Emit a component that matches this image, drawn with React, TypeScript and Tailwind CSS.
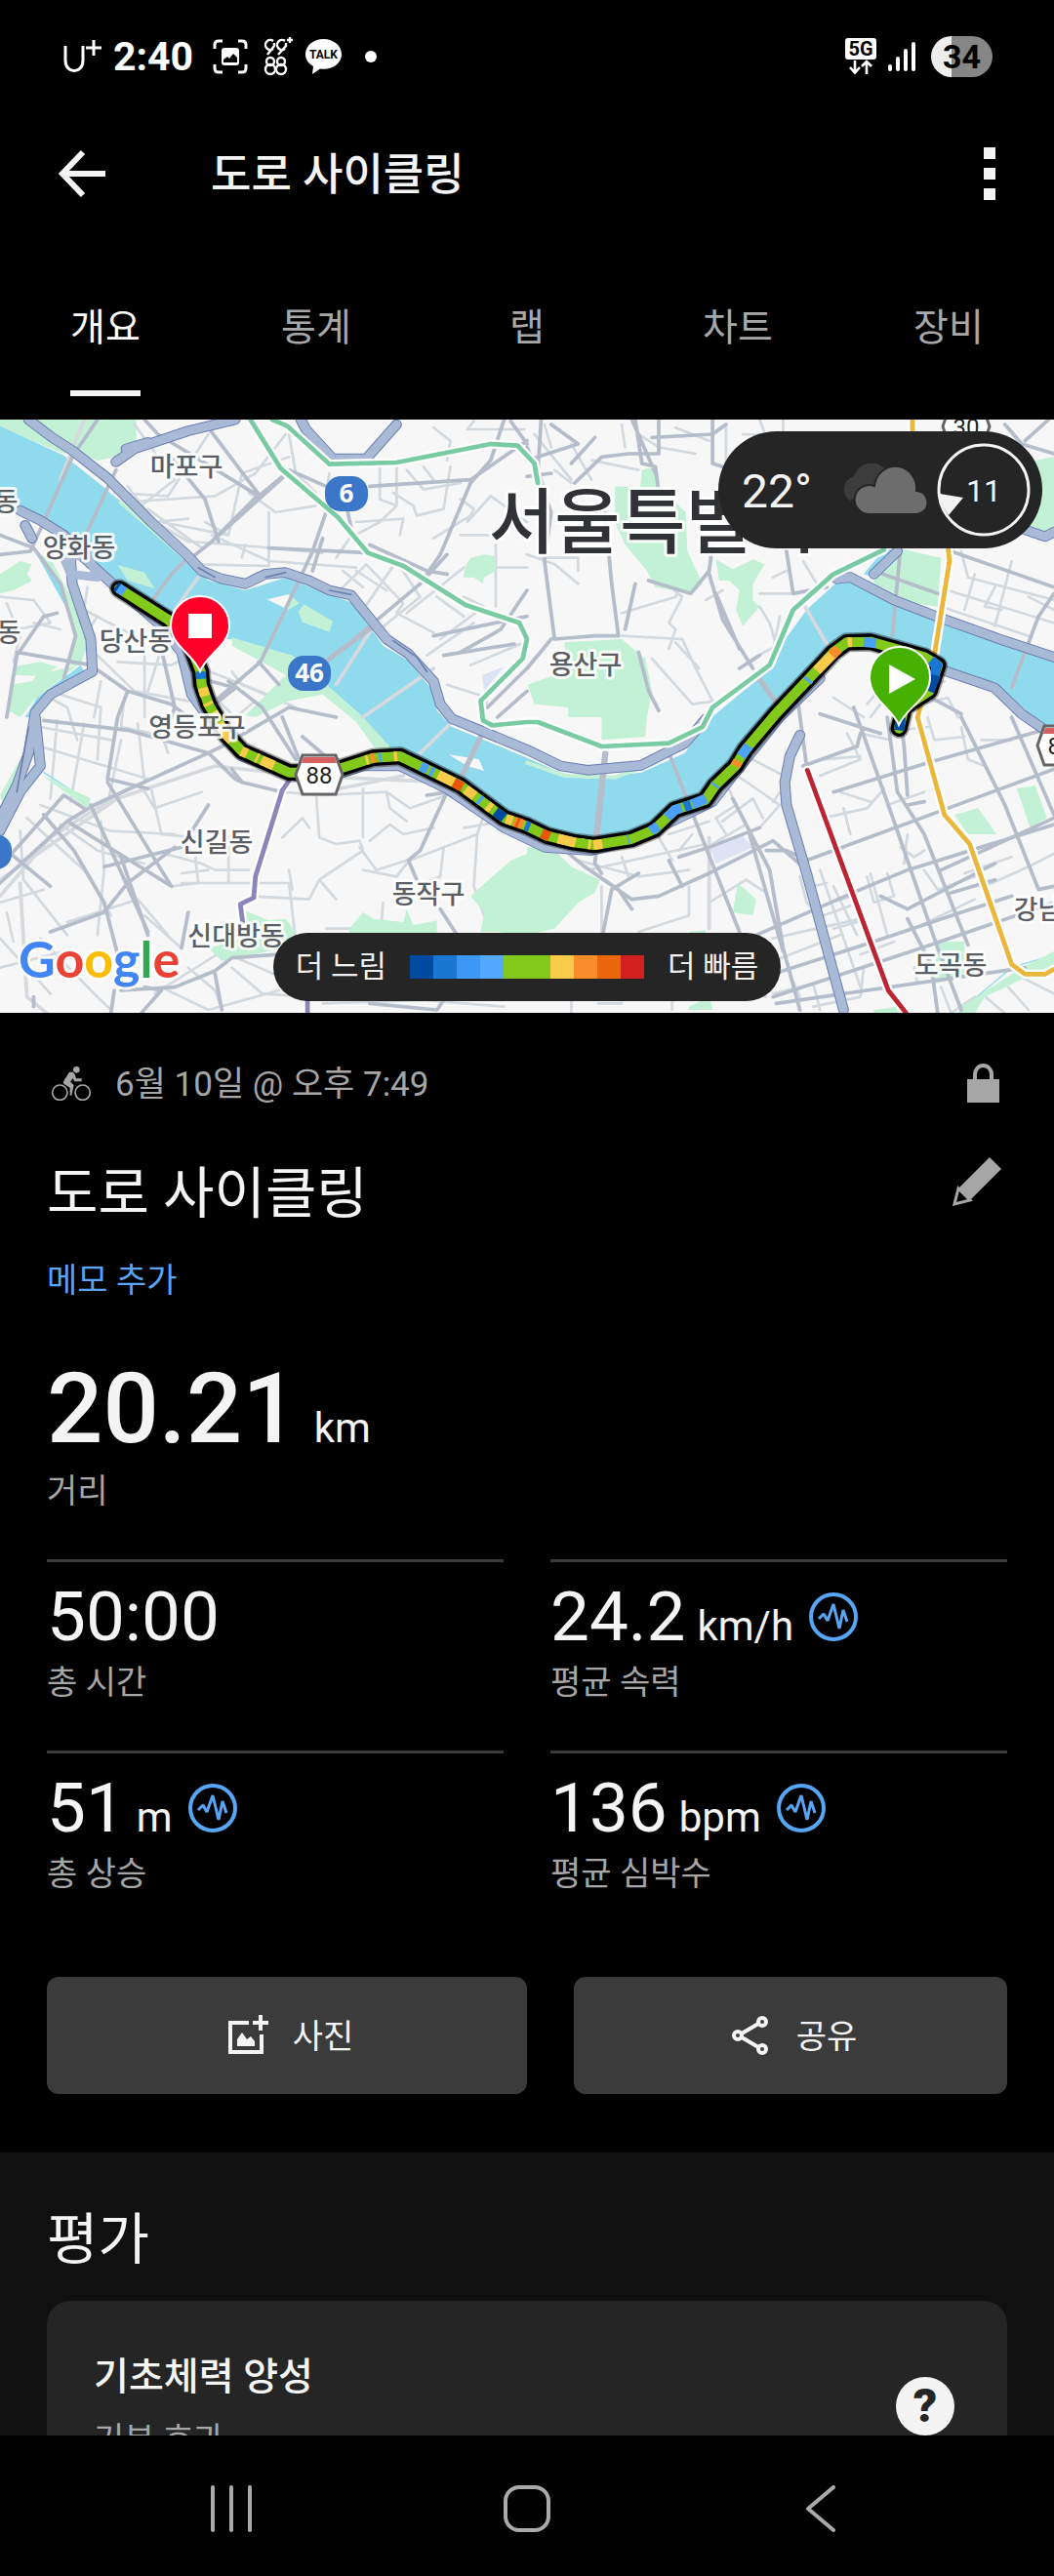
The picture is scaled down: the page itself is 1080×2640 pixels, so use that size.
import type { ReactNode } from 'react';

const tabs = ['개요', '통계', '랩', '차트', '장비'];

const stats = [
  { value: '50:00', unit: '', label: '총 시간', chart: false },
  { value: '24.2', unit: 'km/h', label: '평균 속력', chart: true },
  { value: '51', unit: 'm', label: '총 상승', chart: true },
  { value: '136', unit: 'bpm', label: '평균 심박수', chart: true },
];

const speedColors = [
  'bg-[#004a9f]',
  'bg-[#1976d2]',
  'bg-[#3d97f5]',
  'bg-[#55a8ff]',
  'bg-[#83c91c]',
  'bg-[#83c91c]',
  'bg-[#facb4b]',
  'bg-[#fa8d29]',
  'bg-[#ea670c]',
  'bg-[#d3201f]',
];

const mapLabels = [
  { text: '마포구', x: 191, y: 48 },
  { text: '양화동', x: 81, y: 131 },
  { text: '당산동', x: 139, y: 227 },
  { text: '동', x: 6, y: 84 },
  { text: '동', x: 9, y: 218 },
  { text: '영등포구', x: 202, y: 315 },
  { text: '신길동', x: 222, y: 433 },
  { text: '동작구', x: 439, y: 486 },
  { text: '신대방동', x: 242, y: 529 },
  { text: '용산구', x: 600, y: 251 },
  { text: '강남구', x: 1076, y: 502 },
  { text: '도곡동', x: 974, y: 559 },
];

const parks = [
  'M0 15H405V90L380 120L290 142L215 110L190 120L0 40Z',
  'M0 490L60 450L95 460L80 490L95 510L40 540L0 550Z',
  'M40 775L120 760L170 775L130 805L45 800Z',
  'M30 830L95 820L110 800L230 770L100 880L60 930L25 910Z',
  'M110 430L150 440L230 600L260 700L240 770L200 770L225 680L190 540Z',
  'M350 462L430 485L460 535L380 510Z',
  'M270 450L340 510L330 520L260 470Z',
  'M905 583L990 635L980 668L900 638L887 605Z',
  'M860 550L890 580L860 600Z',
  'M690 685L870 740L960 820L1080 930L1160 1020L1140 1060L1060 945L960 860L860 880L760 930L730 925L850 800L690 710Z',
  'M1400 440L1440 430L1475 435L1475 480L1440 500L1437 520L1410 500L1378 500L1385 465Z',
  'M1830 220L1905 225L1910 170L1950 160L1955 215L2040 300L2045 420L2090 520L2060 550L1950 530L1925 480L1860 400L1830 330Z',
  'M2130 445L2180 475L2240 445L2275 460L2240 520L2240 570L2260 590L2210 650L2190 600L2200 540L2170 510L2140 510Z',
  'M1680 700L1850 690L1920 750L1940 850L1925 930L1920 990L1790 1000L1790 930L1690 930L1690 900L1590 890L1570 830L1680 790Z',
  'M2600 480L2690 415L2800 440L2790 590L2720 580L2600 520Z',
  'M3030 150L3136 130V350L3090 360L2990 330Z',
  'M1400 1480L1520 1370L1568 1350V1330L1640 1330L1700 1390L1785 1430L1770 1470L1720 1500L1650 1580L1568 1600L1480 1590L1430 1590L1440 1530Z',
  'M1040 1580L1080 1530L1110 1550L1200 1560L1210 1520L1230 1570L1300 1555V1595H1040Z',
  'M730 1525L800 1555L850 1550L880 1590L840 1640L660 1680L620 1640L720 1610Z',
  'M2195 1440L2250 1490L2240 1540L2180 1530Z',
  'M2840 1230L2910 1210L2965 1290L2880 1290Z',
  'M3025 1150L3080 1140L3115 1240L3065 1270Z',
  'M2790 1620L2870 1620L2870 1730L2775 1750Z',
  'M2860 1820L3040 1700L3136 1650V1690L2930 1790L2900 1840H2850Z',
  'M2050 1590L2100 1585L2100 1610L2060 1600ZM2050 1820L2110 1790L2120 1830H2050ZM2600 1830L2670 1820V1840H2600Z',
  'M130 1110L270 1180L260 1210L140 1120ZM0 1170L60 1060L50 1120L10 1200Z',
];

const minorRoads = [
  'M340 240L500 250L620 60M360 270L640 250L760 180L850 60M440 290L600 410M480 330L680 370L720 180L860 130',
  'M400 30L520 200L420 280M630 370L800 450L1060 470M720 440L730 400M800 300V460M590 460L800 465',
  'M610 330L680 370M740 240L820 300L940 280M380 220L460 330L560 320M330 250L560 390L700 400L960 425',
  'M860 60L880 180L940 240M980 180L970 240M1130 160V260L1180 280V160M1180 280L1130 330L1040 380L1000 440M1170 240L1230 280L1240 310L1320 290L1340 160',
  'M1060 330L1200 320L1190 370M1210 170L1260 230L1370 210M1260 160L1290 200M1290 40L1340 80L1330 140M1390 45H1560M1390 45L1410 20',
  'M1370 260L1410 290L1390 330L1460 250L1568 330M1290 380L1400 310M1370 370H1460M1470 470H1568M1475 400V590',
  'M990 560L1090 460L1200 580L1180 610L1290 670M1080 600L1180 450L1250 560L1130 660M1210 610L1380 470M1150 540L1060 480M1020 480L1080 530',
  'M1300 560L1380 620M1310 690L1440 590L1380 560M1270 740L1410 640M1330 830L1450 870L1430 980M1400 770L1560 700',
  'M260 530L250 600L400 680M230 590L290 620L240 700M0 560L100 570L150 640L50 660M20 580L60 680L40 760M100 640L180 660',
  'M290 740L400 850L560 880M300 820L280 930M350 760L510 770L640 700M430 700V930M560 820L640 870L700 930L760 880M600 780L820 870',
  'M370 870L360 960L500 990M180 860L300 900L290 1060M130 860L200 900L230 1000M480 720L440 850M690 790L720 830L880 900',
  'M120 960L330 1000M120 1020L440 1120M170 940L150 1180M250 950L210 1190M360 1000L320 1200M410 950L430 1130M480 980L500 1040',
  'M120 1200L330 1280L520 1290M180 1260L290 1340L430 1380M80 1240L260 1410L330 1540M60 1280L70 1430L200 1600M300 1250L310 1400L290 1600',
  'M420 1140L460 1210L600 1160M450 1150L480 1290L580 1300M490 1350L600 1380L640 1400H740M580 1350L590 1440L510 1450M680 1300V1440',
  'M540 1440H860L880 1620M540 1410L620 1400M740 1480L920 1490L950 1430L1080 1340L1070 1310L1000 1320L950 1300L940 1160M950 1430L1000 1490',
  'M1080 1150V1300M840 1160L960 1170L1150 1160L1220 1210L1330 1170M1150 1160L1160 1210L1210 1250M1070 1330L1120 1400L1210 1370M1100 1310L1160 1260L1200 1290L1290 1270M1220 1370L1420 1290L1450 1200M1320 1330L1310 1420L1260 1440M1140 1500L1130 1610',
  'M1380 1270L1500 1250M1420 1290L1410 1450L1440 1540M1080 1400L1180 1420L1210 1380M860 1400L870 1460M970 1580H1050M840 1300L900 1240L920 1270',
  'M0 1610L150 1780M0 1700L190 1650L270 1720M120 1610L280 1780L330 1830M200 1560L410 1490L500 1600M430 1540L540 1640M20 1530L40 1620M0 1500L130 1460',
  'M460 1780L660 1650L860 1740M480 1760L620 1830L830 1770M560 1700L640 1770L660 1830M690 1700L780 1780L930 1790M960 1810L1260 1800L1500 1820',
  'M1720 1370L1900 1420L2050 1400M1750 1400L2100 1320M1790 1450V1590M1850 1360L1870 1420M2050 1450V1540L1900 1590M1990 1290L2110 1250M2020 1340L2060 1290M1960 1300L2000 1370',
  'M2160 1130L2190 1200L2130 1240L2160 1290M2180 1100L2320 1200L2260 1270M2240 1060L2350 1120L2300 1190M2150 1250L2240 1180L2270 1240M2120 1320L2220 1260',
  'M2440 1110L2560 1060L2520 980M2500 1160L2590 1190M2450 1240L2580 1210L2630 1150M2510 1210L2530 1290M2110 1500L2220 1430L2280 1470',
  'M1568 430L1650 460L1720 520M1600 440H1720V480M1570 100L1620 220M1590 60L1700 200M1620 30L1640 100M1700 90L1760 200M1760 140L1900 170M1650 170L1700 210',
  'M1900 60L1960 100L2070 120M2010 40L2110 80M2160 40V200L2340 180M2210 60L2430 70M2330 15V60M1850 30L1860 100M2260 15L2280 70',
  'M1980 520L2030 560L1990 640L2010 660L1990 720M1850 610L2010 560L2040 490M1850 680L2030 690L2070 780L2120 880M2010 700L2080 780M2240 750L2310 710L2290 640L2260 590',
  'M2260 550L2370 550M2320 620L2290 780M2390 450L2430 520M2340 480L2300 500M2100 570L2150 540M1940 750L2000 820L2060 890L2130 880',
  'M2820 540L3136 640M2800 590L3060 680M2900 490L2870 600M3010 450L2960 650M2960 530L2930 590L2980 600M2860 420L2880 500L3136 570M3060 560L3136 600',
  'M2580 890L2620 840L2690 860M2480 870L2570 930M2620 890L2590 930M2700 900L2820 870L2850 930M2740 850L2810 820',
  'M2450 1060L2560 1050M2560 980L2650 1000M2680 970L2760 960M2760 930L2780 1000L2870 990M2860 960L2880 1060L2930 1080M2920 1000L3010 1000M2640 1200L2750 1160M2700 1290L2690 1380',
  'M2870 1410L3010 1360M2930 1450L3060 1390L3136 1350M2750 1400L2790 1460L2900 1420M2680 1330L2720 1360L2750 1340M2580 1420L2600 1500L2660 1480L2640 1410M2740 1570L2900 1490M2770 1680L2720 1700L2730 1750',
  'M2480 1450L2550 1600M2450 1540L2530 1510M2480 1580L2550 1560M2440 1400L2560 1760M2590 1410L2640 1600M2420 1450L2460 1440M2470 1500L2540 1480M2380 1420L2400 1500L2440 1540M2300 1610L2560 1550M2300 1680L2500 1600M2560 1660L2660 1620',
  'M2300 1780L2420 1750L2440 1830M2350 1720L2380 1790M2100 1740L2280 1790M1700 1770V1840M1780 1810H1850M2000 1780V1830M2420 1820L2560 1790L2570 1700M2920 1780L2990 1840M3000 1760L3060 1830M3040 1730L3136 1780M2800 1760L2830 1840L2900 1790',
];

const majorRoads = [
  'M290 15L215 130L130 330L90 420L0 430M345 170L250 380M430 15L470 60L770 250L840 190M620 40L770 245L630 390M500 120L610 260L650 390',
  'M570 440L630 390L840 195M860 170L970 220M1100 220L1400 200M1400 200L1470 150L1568 80M1500 15L1460 140L1400 210L1310 430L1270 490',
  'M800 410L1100 425M970 300L930 420L885 520L775 760L640 880M1035 300L1045 350M1100 400L1270 480L1330 490M1568 540L1490 660L1370 730M1290 680L1568 620',
  'M560 440L510 490L440 590M970 760L1100 650L1250 520L1330 430M1520 20L1568 90M1320 740L1530 705M1450 900L1568 780M1480 930L1568 850',
  'M770 760L830 830M680 820L780 900L880 1060M560 800L700 840L640 890M960 380L930 480',
  'M0 370L100 410L180 520L225 680L190 810M20 930L50 740L130 620L170 610M50 730L270 770L380 850L510 890L560 930M380 850L350 930L320 1120L440 1150',
  'M130 940L380 970L620 1040L700 1120L720 1130M480 720L520 900L510 930M0 1440L200 1250L280 1200L620 1040L660 1020L860 900L1000 930',
  'M130 1230L220 1340L310 1500L360 1700M200 1250L510 1450M270 1200L440 1590M360 1360L440 1600M310 1390L540 1330L620 1200M150 1590L310 1530L380 1440L520 1330M0 1390L190 1170L250 1210M20 1340L150 1450M320 1130L510 1450M560 1530L540 1640',
  'M690 1090L720 1130L840 1160M840 930L890 1060M980 1060L900 990M1330 1160L1250 1340L1215 1370L1240 1430M1310 1520L1360 1600M1270 1170L1340 1160',
  'M360 1770L520 1760L640 1710L690 1670L820 1660M430 1760L480 1770L420 1840M100 1820V1790M340 1770L330 1840M640 1720L660 1830M1100 1810L1300 1830L1320 1800',
  'M1610 15L1600 180M1800 300L1820 520L1840 680L1770 680L1650 690L1620 450L1640 300L1568 100M1640 690L1568 780M1568 140L1720 90L1640 30M1700 150L1770 70M1710 210L1790 130L1870 120M1890 15L1910 150L1950 160L1960 240M1880 15L1950 180M1960 15V120H1870M1940 70L2120 60L2160 30M2120 15V150L2180 170M1568 190L1640 180',
  'M2340 420L2360 550L2460 530M1890 520L1860 660M1930 510L2055 550L2110 480L2120 400M2110 490L2150 630L2240 780M2130 550L2200 720M2200 780L2260 740M1900 730L1930 850L1960 910M2680 400L2655 680M2600 480L2790 550M2830 420L3136 530M2990 30L3040 90L3136 120M3136 550L3090 620L3010 840M3050 80L3120 15',
  'M1805 1040L1770 1380L1790 1410M1990 1040L2100 1330L2200 1590M1670 1330L1740 1390L1880 1490L1960 1480L2110 1410L2300 1310L2400 1400M1740 1390L1840 1460L1880 1520M1900 1410L1820 1460L1795 1590M2020 1360L2110 1330L2260 1270M1990 1370L2030 1450M2180 1180L2290 1400L2330 1640L2380 1830M2230 1290L2330 1650',
  'M2250 1600L2560 1460L2700 1400L3136 1260M2300 1720L2600 1620L2860 1530L3010 1480M2300 1790L2740 1640L3136 1500M2280 1340L2340 1340L2400 1370L3136 1090M2390 1080L2550 1020L2560 980M2480 1160L2760 1070L3000 1000L3136 960',
  'M2540 900L2660 1250L2790 1640L2860 1830M2640 930L2670 1160L2750 1290L2880 1630M2680 930L2690 1020L2700 1170M2860 930L2990 1200L3090 1460M3010 930L3136 1230M2370 850L2400 1080M2440 920L2620 980M2800 1400L3136 1240M2700 1200L2750 1190M2310 1810L3050 1700M2830 1470L2960 1430M3090 1460L3136 1450M2700 1550L2770 1690L2790 1840M2770 870L2860 920M2620 1480L2700 1520L2960 1380',
];

const highways = [
  'M85 15L155 70L215 110L320 195L450 330L560 435L600 480L660 505L730 520L790 490L850 485L920 510L980 540L1045 555L1150 690L1215 735L1290 820L1310 890L1345 935L1440 975L1568 1030L1668 1080L1748 1093L1908 1078L2038 1010L2100 935',
  'M345 145L400 105L560 50L700 15M375 105L440 85M895 15L910 45L990 135L1090 135L1180 30',
  'M60 295L120 325L190 370L250 440L340 525L470 640L540 730L570 860L640 960L720 1050L870 1110L960 1120L1080 1080L1190 1080L1330 1150L1500 1270L1620 1330L1760 1340L1880 1310L2020 1240L2120 1190L2180 1110L2320 930L2440 810',
  'M210 440L215 520L270 690L275 790L150 860L105 915L85 1040L50 1140L0 1240M105 930L120 1080L60 1160L0 1280M75 340L95 380',
  'M2490 505L2530 500L2660 570L2798 625L2988 695L3136 745M2600 490L2670 420M3040 350L3110 375L3136 360',
  'M2790 780L2960 840L3040 920L3110 970L3136 1000',
  'M2380 985L2350 1050L2335 1130L2340 1200L2400 1410L2510 1830',
];

// line colours follow the subway map, each one drawn over a white casing
const railLines = [
  { d: 'M745 15L835 165L1005 315L1095 425L1200 465L1385 585L1545 640L1568 690L1555 750L1430 880L1437 940L1465 955L1568 945L1600 945L1790 1020L1990 1010L2090 960L2120 900L2290 770L2360 600L2480 490L2630 415', color: '#78cba2' },
  { d: 'M810 15L855 35L980 152L1180 147L1460 90L1540 95L1590 150L1600 210', color: '#78cba2' },
  { d: 'M2715 15V60M2820 400L2825 450L2780 740L2730 930L2810 1230L2885 1320L3010 1690L3050 1720H3110L3136 1705', color: '#ebb63c' },
  { d: 'M860 1125L840 1155L760 1420L755 1485L715 1505L722 1560M915 1800V1840', color: '#8a86ba' },
  { d: 'M2402 1093L2643 1770L2700 1845', color: '#bd2431' },
];

const track =
  'M2675 965L2690 900L2765 850L2790 770L2750 745L2590 698L2520 700L2480 730L2440 775L2308 920L2218 1030L2188 1080L2128 1140L2098 1185L2008 1215L1978 1245L1948 1275L1878 1305L1768 1323L1708 1315L1628 1295L1568 1265L1500 1240L1370 1140L1190 1050L1110 1055L1020 1085L950 1100L860 1100L720 1035L670 980L620 890L600 830L597 790M355 535L500 630L560 690L597 790';

const slow = '#004a9f';
const blue = '#4ba0fa';
const yellow = '#facb4b';
const orange = '#fa8d29';
const fast = '#ea570c';
const green = '#83c91c';

const trackSegments: [string, string][] = [
  ['M2675 970L2680 930', slow],
  ['M2765 850L2785 800', slow],
  ['M2780 800L2788 770L2770 755', '#1976d2'],
  ['M2606 703L2570 699', blue],
  ['M2535 699L2522 700', yellow],
  ['M2495 720L2475 740', orange],
  ['M2475 740L2430 787', yellow],
  ['M2408 813L2402 820', blue],
  ['M2228 1018L2205 1050', blue],
  ['M2196 1065L2188 1080', orange],
  ['M2130 1137L2126 1142', blue],
  ['M2100 1180L2060 1198', blue],
  ['M2056 1199L2036 1206', '#1976d2'],
  ['M2028 1209L2008 1215L1985 1238', blue],
  ['M1958 1265L1936 1280', blue],
  ['M1872 1306L1868 1307', blue],
  ['M1792 1320L1766 1323', yellow],
  ['M1758 1322L1750 1321', yellow],
  ['M1738 1318L1728 1317', green],
  ['M1712 1316L1660 1303', yellow],
  ['M1635 1297L1612 1287', fast],
  ['M1576 1268L1563 1263', '#1976d2'],
  ['M1556 1260L1530 1250', orange],
  ['M1544 1256L1536 1253', fast],
  ['M1525 1249L1506 1243', yellow],
  ['M1500 1240L1474 1220', slow],
  ['M1462 1211L1450 1202', yellow],
  ['M1432 1188L1424 1182', blue],
  ['M1412 1172L1385 1152', yellow],
  ['M1376 1145L1350 1131', fast],
  ['M1350 1130L1304 1107', yellow],
  ['M1290 1100L1280 1095', blue],
  ['M1272 1091L1252 1081', blue],
  ['M1182 1050L1172 1051', yellow],
  ['M1135 1053L1128 1054', blue],
  ['M1116 1055L1104 1057', orange],
  ['M1096 1060L1088 1062', yellow],
  ['M815 1079L778 1062', yellow],
  ['M768 1057L762 1054', yellow],
  ['M735 1042L718 1034', yellow],
  ['M690 1003L670 980L652 948', yellow],
  ['M644 932L634 915', '#fbdf7a'],
  ['M622 893L618 885', yellow],
  ['M610 865L603 840', yellow],
  ['M598 812L597 790', '#1976d2'],
  ['M355 535L345 528', slow],
  ['M352 533L370 545', blue],
];

function MapShield({ x, y, text }: { x: number; y: number; text: string }) {
  return (
    <g>
      <path
        d={`M${x - 24} ${y}L${x - 17} ${y - 20}H${x + 17}L${x + 24} ${y}L${x + 17} ${y + 20}H${x - 17}Z`}
        fill="#fff"
        stroke="#666"
        strokeWidth="3"
      />
      <path d={`M${x - 16} ${y - 18}H${x + 16}L${x + 18} ${y - 12}H${x - 18}Z`} fill="#d75f5f" />
      <text x={x} y={y + 9} textAnchor="middle" fontSize="24" fill="#222">
        {text}
      </text>
    </g>
  );
}

function RouteBadge({ x, y, text }: { x: number; y: number; text?: string }) {
  return (
    <g>
      <rect x={x - 22} y={y - 18} width="44" height="36" rx="16" fill="#3a77c8" />
      {text && (
        <text x={x} y={y + 9} textAnchor="middle" fontSize="26" fontWeight="700" fill="#fff" fontFamily="Noto Sans, sans-serif">
          {text}
        </text>
      )}
    </g>
  );
}

function RideMap() {
  return (
    <svg
      viewBox="0 0 1080 608"
      preserveAspectRatio="xMidYMid slice"
      className="block h-[608px] w-full"
      role="img"
      aria-label="경로 지도"
    >
      <rect width="1080" height="608" fill="#f7f7f7" />
      <g transform="scale(.34439 .33333) translate(0 -15)" fill="none" strokeLinejoin="round" strokeLinecap="round">
        {parks.slice(0, 1).map((d) => (
          <path key={d} d={d} fill="#c3f1d5" />
        ))}
        <g stroke="#d2d9df" strokeWidth="8">
          {minorRoads.map((d) => (
            <path key={d} d={d} />
          ))}
        </g>

        <g fill="#90daee">
          <path d="M0 35L190 125L300 215L450 350L560 455L620 510L730 540L850 500L960 545L1050 580L1140 710L1220 760L1280 840L1300 910L1345 960L1440 1000L1568 1055L1668 1100L1748 1120L1908 1100L2038 1040L2100 945L2270 800L2330 700L2400 600L2490 515L2530 510L2660 580L2798 640L2988 705L3136 760V1000L3090 940L2970 840L2790 770L2590 698L2510 700L2440 775L2308 920L2188 1080L2098 1170L1968 1250L1878 1300L1768 1320L1628 1290L1500 1230L1370 1130L1230 1060L1160 1040L1080 930L960 820L870 750L690 690L560 690L500 630L340 510L250 430L160 345L60 285L0 225Z" />
          <path d="M45 315L90 400L140 450L225 610L265 700L235 770H220L250 700L200 600L120 450Z" />
          <path d="M240 770L110 870L75 930H95L120 890L250 790ZM2570 490L2630 415H2690L2600 500ZM3060 370L3136 330V360L3100 370Z" />
        </g>
        <path d="M2860 1830L3010 1700L3136 1660M130 1100L265 1190" stroke="#90daee" strokeWidth="4" />
        <path d="M795 568L860 552L858 600ZM1335 1045L1425 1060L1440 1095L1390 1080Z" fill="#f7f7f7" />
        <path d="M2110 1330L2210 1295L2240 1330L2130 1380ZM1435 800L1500 775L1440 850Z" fill="#dbe3f5" />
        {parks.slice(1).map((d) => (
          <path key={d} d={d} fill="#c3f1d5" />
        ))}
        <path d="M200 110L330 215M360 270L560 450M1160 1035L1240 1055M1568 1070L1680 1110L1830 1115L1950 1070" stroke="#c3f1d5" strokeWidth="12" />

        <path
          d="M250 15L180 200M590 500L520 600M1105 660L1000 830M1290 780L1080 930M2395 590L2480 740M1360 930L1250 1040M0 1430L350 1180L640 1080L900 1110L1320 1130M60 1440L80 1790L140 1840M0 1480L150 1300L380 1150M1010 1150L1200 1110M2110 1300L2110 1580"
          stroke="#d6dadf"
          strokeWidth="11"
        />
        <g stroke="#b5bdcb" strokeWidth="11">
          {majorRoads.map((d) => (
            <path key={d} d={d} />
          ))}
          <path d="M980 750L1110 650M1430 990L1370 1120M2250 800L2320 900M1800 1040L1770 1320" strokeWidth="16" />
        </g>

        <g stroke="#6d80b3" strokeWidth="32">
          {highways.map((d) => (
            <path key={d} d={d} />
          ))}
        </g>
        <g stroke="#a9bad6" strokeWidth="26">
          {highways.map((d) => (
            <path key={d} d={d} />
          ))}
          <path d="M190 440L260 430L290 500L210 490Z" />
        </g>
        <path d="M590 470L640 500M790 500L850 485M980 540L1045 553M1170 695L1240 745L1270 790M85 960L50 1160" stroke="#6d80b3" strokeWidth="5" />

        {railLines.map((line) => (
          <g key={line.d}>
            <path d={line.d} stroke="#fff" strokeWidth="28" />
            <path d={line.d} stroke={line.color} strokeWidth="14" />
          </g>
        ))}

        <path d={track} stroke="#000" strokeOpacity=".35" strokeWidth="60" />
        <path d={track} stroke="#000" strokeWidth="50" />
        <path d={track} stroke="#83c91c" strokeWidth="30" />
        <g strokeWidth="30" strokeLinecap="butt">
          {trackSegments.map(([d, color]) => (
            <path key={d} d={d} stroke={color} />
          ))}
        </g>
      </g>

      <g fill="#5b5e64" stroke="#fff" strokeOpacity=".9" strokeWidth="6" strokeLinejoin="round" paintOrder="stroke" textAnchor="middle">
        {mapLabels.map((label) => (
          <text key={label.text + label.x} x={label.x} y={label.y + 10} fontSize="27" fontWeight="500">
            {label.text}
          </text>
        ))}
        <text x="501" y="131" fontSize="73" fontWeight="500" fill="#303236" textAnchor="start">
          서울특별시
        </text>
      </g>

      <MapShield x={327} y={364} text="88" />
      <MapShield x={1087} y={334} text="88" />
      <MapShield x={990} y={7} text="30" />
      <RouteBadge x={355} y={76} text="6" />
      <RouteBadge x={317} y={260} text="46" />
      <RouteBadge x={-10} y={443} />

      <path d="M205 258C198 240 175 232 175 211A30 30 0 0 1 235 211C235 232 212 240 205 258Z" fill="#ff002b" stroke="#fff" strokeWidth="2" />
      <rect x="193" y="199" width="24" height="25" fill="#fff" />
      <path d="M921 313C914 295 891 287 891 264A31 31 0 0 1 953 264C953 287 928 295 921 313Z" fill="#46b100" stroke="#fff" strokeWidth="2" />
      <path d="M911 251L938 266L911 281Z" fill="#fff" />

      <text
        x="19"
        y="572"
        fontSize="52"
        fontWeight="700"
        fontFamily="Lato, sans-serif"
        stroke="#fff"
        strokeOpacity=".8"
        strokeWidth="6"
        paintOrder="stroke"
      >
        <tspan fill="#4285f4">G</tspan>
        <tspan fill="#ea4335">o</tspan>
        <tspan fill="#fbbc04">o</tspan>
        <tspan fill="#4285f4">g</tspan>
        <tspan fill="#34a853">l</tspan>
        <tspan fill="#ea4335">e</tspan>
      </text>
    </svg>
  );
}

function StatusBar() {
  return (
    <div className="flex h-[116px] shrink-0 items-center justify-between pr-[63px] pl-16 text-white">
      <div className="flex items-center">
        <svg width="40" height="36" viewBox="0 0 40 36" fill="none" stroke="#fff" strokeWidth="3">
          <path d="M3 7V22C3 36 21 36 21 22V7M24 9H40M32 1V17" />
        </svg>
        <span className="ml-3 text-[41px] leading-none font-bold">2:40</span>
        <svg className="ml-5" width="36" height="36" viewBox="0 0 36 36" fill="none" stroke="#fff" strokeWidth="3">
          <path d="M2 10V6Q2 2 6 2H10M26 2H30Q34 2 34 6V10M34 26V30Q34 34 30 34H26M10 34H6Q2 34 2 30V26" />
          <rect x="9" y="9" width="18" height="18" rx="3" fill="#fff" stroke="none" />
          <path d="M11 24V21L15 18L17 20L21 15L25 19V24Z" fill="#000" stroke="none" />
        </svg>
        <svg className="ml-4" width="31" height="40" viewBox="0 0 31 40" fill="none" stroke="#fff" strokeWidth="2.4">
          <path d="M10 4A5 5 0 1 0 10 12M22 4A5 5 0 1 0 22 12" />
          <path d="M11 6V9L4 18M23 6V9L15 18M27 0V6M24 3H30" />
          <circle cx="7" cy="25" r="4" />
          <circle cx="18" cy="25" r="4" />
          <circle cx="7" cy="33" r="5" />
          <circle cx="18" cy="33" r="5" />
        </svg>
        <svg className="ml-3" width="37" height="36" viewBox="0 0 37 36">
          <path d="M18.500 0C8 0 0 7 0 15.500C0 21 3 25 8 28L7 36L15 30.500C28 32 37 25 37 15.500C37 7 29 0 18.500 0Z" fill="#fff" />
          <text x="18.500" y="20" fontSize="12" fontWeight="700" textAnchor="middle" fill="#000">
            TALK
          </text>
        </svg>
        <span className="ml-6 size-3 rounded-full bg-white" />
      </div>
      <div className="flex items-center">
        <svg width="32" height="38" viewBox="0 0 32 38">
          <rect width="32" height="22" rx="3" fill="#fff" />
          <text x="16" y="18" fontSize="20" fontWeight="700" textAnchor="middle" fill="#000">
            5G
          </text>
          <path d="M10 23V35M5 30L10 35.500L15 30M22 37V25M17 29L22 24L27 29" fill="none" stroke="#fff" strokeWidth="2.600" />
        </svg>
        <svg className="ml-3" width="28" height="30" viewBox="0 0 28 30" stroke="#fff" strokeWidth="4" strokeLinecap="round">
          <path d="M2 25V28M10 17V28M18 9V28M26 2V28" />
        </svg>
        <span className="ml-4 flex h-[42px] w-[63px] items-center justify-center rounded-full bg-[linear-gradient(to_right,#ededed_34%,#868686_34%)] text-[34px] leading-none font-bold text-black">
          34
        </span>
      </div>
    </div>
  );
}

function WeatherPill() {
  return (
    <div className="absolute top-3 right-3 flex h-[120px] items-center rounded-full bg-[#252525] pr-3 pl-6">
      <span className="pt-1 text-5xl text-[#f4f4f4]">22°</span>
      <svg className="ml-6" width="96" height="56" viewBox="0 0 96 56">
        <path d="M15 39A14 14 0 0 1 19 14A19 19 0 0 1 52 8L40 28Z" fill="#3c3c3c" />
        <path d="M34 53A15 15 0 1 1 40 24A21 22 0 0 1 83 29A12 12 0 0 1 82 53Z" fill="#6d6d6d" stroke="#252525" strokeWidth="2" />
      </svg>
      <svg className="ml-2" width="96" height="96" viewBox="0 0 96 96" role="img" aria-label="풍속 11">
        <circle cx="48" cy="48" r="46" fill="none" stroke="#f4f4f4" strokeWidth="3" />
        <path d="M3 52L27 56L12 74Q4 64 3 52Z" fill="#f4f4f4" />
        <text x="48" y="60" fontSize="32" textAnchor="middle" fill="#f4f4f4">
          11
        </text>
      </svg>
    </div>
  );
}

function SpeedLegend() {
  return (
    <div className="absolute bottom-3 left-1/2 flex h-[70px] w-[520px] -translate-x-1/2 items-center justify-center gap-6 rounded-full bg-[#252525] text-[31px] whitespace-nowrap text-[#f0f0f0]">
      <span>더 느림</span>
      <div className="flex">
        {speedColors.map((color, i) => (
          <span key={i} className={`h-6 w-6 ${color}`} />
        ))}
      </div>
      <span>더 빠름</span>
    </div>
  );
}

function ChartIcon() {
  return (
    <svg className="self-center" width="50" height="50" viewBox="0 0 50 50" fill="none" stroke="#57a5f5">
      <circle cx="25" cy="25" r="23" strokeWidth="4" />
      <path d="M10 27L15 22L19 29L25 12L31 37L35 18L39 30" strokeWidth="3" strokeLinejoin="bevel" />
    </svg>
  );
}

function ActionButton({ icon, children }: { icon: ReactNode; children: ReactNode }) {
  return (
    <button type="button" className="flex h-[120px] items-center justify-center rounded-xl bg-[#3b3b3b] pl-2 text-[34px] text-[#f4f4f4]">
      {icon}
      <span className="pt-0.5">{children}</span>
    </button>
  );
}

export default function App() {
  return (
    <div className="flex h-screen flex-col overflow-hidden bg-black font-[Roboto,'Noto_Sans_CJK_KR',sans-serif] text-[#f4f4f4]">
      <StatusBar />

      <header className="flex h-[124px] shrink-0 items-center px-[60px]">
        <button type="button" aria-label="뒤로">
          <svg width="48" height="50" viewBox="0 0 48 50" fill="none" stroke="#f4f4f4" strokeWidth="6">
            <path d="M48 25H5M25 3L4 25L25 47" />
          </svg>
        </button>
        <h1 className="ml-[108px] flex-1 pt-1 text-[45px] font-medium">도로 사이클링</h1>
        <button type="button" aria-label="더보기" className="flex flex-col gap-[9px]">
          <span className="size-3 bg-[#f4f4f4]" />
          <span className="size-3 bg-[#f4f4f4]" />
          <span className="size-3 bg-[#f4f4f4]" />
        </button>
      </header>

      <nav className="grid shrink-0 grid-cols-5 pt-16 pb-6">
        {tabs.map((tab, i) => (
          <button
            key={tab}
            type="button"
            aria-current={i === 0 ? 'page' : undefined}
            className={`flex flex-col items-center gap-8 text-[39px] leading-16 ${i === 0 ? 'text-white' : 'text-[#a8a8a8]'}`}
          >
            {tab}
            <span className={`h-1.5 w-[72px] ${i === 0 ? 'bg-[#f4f4f4]' : ''}`} />
          </button>
        ))}
      </nav>

      <main className="min-h-0 flex-1 overflow-y-auto [scrollbar-width:none]">
        <div className="relative">
          <RideMap />
          <WeatherPill />
          <SpeedLegend />
        </div>

        <section className="px-12 pt-12 pb-[60px]">
          <div className="flex h-12 items-center text-[#a6a6a6]">
            <svg className="ml-1" width="42" height="36" viewBox="33 18 126 108" fill="none" stroke="currentColor" strokeWidth="5">
              <circle cx="61" cy="101" r="23" />
              <circle cx="131" cy="101" r="23" />
              <circle cx="112" cy="31" r="10" fill="currentColor" stroke="none" />
              <path d="M90 38H101L107 45L111 58H128V67H106L101 57L93 68L104 78L97 110H92V86L75 76Q68 71 75 62Z" fill="currentColor" stroke="none" />
            </svg>
            <span className="ml-6 flex-1 pt-1 text-[35px]">6월 10일 @ 오후 7:49</span>
            <svg className="mr-2" width="33" height="42" viewBox="0 0 33 42">
              <path d="M8 18V12A8.500 9 0 0 1 25 12V18" fill="none" stroke="currentColor" strokeWidth="4" />
              <rect y="17" width="33" height="24" fill="currentColor" />
            </svg>
          </div>

          <div className="mt-[52px] flex h-[72px] items-start justify-between">
            <h2 className="text-[57px] leading-19">도로 사이클링</h2>
            <button type="button" aria-label="제목 편집" className="mr-1.5">
              <svg width="50" height="50" viewBox="0 0 50 50" fill="#a6a6a6">
                <path d="M38 0L50 12L18 44L6 32Z" />
                <path d="M6 32L2 48L18 44Z" fill="#000" stroke="#a6a6a6" strokeWidth="3" />
              </svg>
            </button>
          </div>
          <button type="button" className="mt-7 block h-12 text-[34px] leading-13 text-[#57a5f5]">
            메모 추가
          </button>

          <div className="mt-15 flex items-baseline gap-4">
            <span className="text-[101px] leading-[100px] font-medium">20.21</span>
            <span className="text-[42px] leading-none">km</span>
          </div>
          <p className="mt-2.5 text-[34px] leading-12 text-[#a6a6a6]">거리</p>

          <dl className="mt-[46px] grid grid-cols-2 gap-12">
            {stats.map((stat) => (
              <div key={stat.label} className="flex flex-col-reverse border-t-[3px] border-[#3b3b3b] pt-5">
                <dt className="mt-[5px] h-12 text-[34px] leading-13 text-[#a6a6a6]">{stat.label}</dt>
                <dd className="flex h-[72px] items-baseline">
                  <span className="text-[71px] leading-[72px]">{stat.value}</span>
                  {stat.unit && <span className="mr-4 ml-3 text-[42px] leading-none">{stat.unit}</span>}
                  {stat.chart && <ChartIcon />}
                </dd>
              </div>
            ))}
          </dl>

          <div className="mt-21 grid grid-cols-[41fr_37fr] gap-12">
            <ActionButton
              icon={
                <svg className="mr-6" width="42" height="42" viewBox="0 0 42 42" fill="none" stroke="#f4f4f4" strokeWidth="4">
                  <path d="M21 8H2V38H34V20M33 0V16M25 8H41" />
                  <path d="M9 32V25L14 18L19 25L23 22L27 27V32Z" fill="#f4f4f4" stroke="none" />
                </svg>
              }
            >
              사진
            </ActionButton>
            <ActionButton
              icon={
                <svg className="mr-7" width="38" height="40" viewBox="0 0 38 40" fill="none" stroke="#f4f4f4" strokeWidth="4">
                  <circle cx="31" cy="6" r="4" />
                  <circle cx="6" cy="20" r="4" />
                  <circle cx="31" cy="34" r="4" />
                  <path d="M10 18L27 8M10 22L27 32" />
                </svg>
              }
            >
              공유
            </ActionButton>
          </div>
        </section>

        <section className="bg-[#101010] px-12 pt-[50px] pb-12">
          <h2 className="text-[57px] leading-20">평가</h2>
          <div className="mt-[22px] flex items-center justify-between rounded-3xl bg-[#252525] pt-[50px] pr-[54px] pb-[46px] pl-12">
            <div>
              <h3 className="text-[39px] leading-14 font-medium">기초체력 양성</h3>
              <p className="mt-3 text-[34px] leading-12 text-[#a6a6a6]">기본 효과</p>
            </div>
            <button type="button" aria-label="도움말" className="flex size-15 items-center justify-center rounded-full bg-[#f4f4f4] text-5xl font-black text-[#252525]">
              ?
            </button>
          </div>
        </section>
      </main>

      <nav className="flex h-36 shrink-0 items-center justify-between bg-[#020202] px-[216px] pt-1.5">
        <button type="button" aria-label="최근 앱">
          <svg width="44" height="48" viewBox="0 0 44 48" stroke="#aaa" strokeWidth="4" strokeLinecap="round">
            <path d="M2 2V46M21 2V46M40 2V46" />
          </svg>
        </button>
        <button type="button" aria-label="홈">
          <svg width="48" height="48" viewBox="0 0 48 48" fill="none" stroke="#aaa" strokeWidth="4">
            <rect x="2" y="2" width="44" height="44" rx="14" />
          </svg>
        </button>
        <button type="button" aria-label="이전">
          <svg width="44" height="48" viewBox="0 0 44 48" fill="none" stroke="#aaa" strokeWidth="4" strokeLinecap="round" strokeLinejoin="round">
            <path d="M34 2L8 24L34 46" />
          </svg>
        </button>
      </nav>
    </div>
  );
}
